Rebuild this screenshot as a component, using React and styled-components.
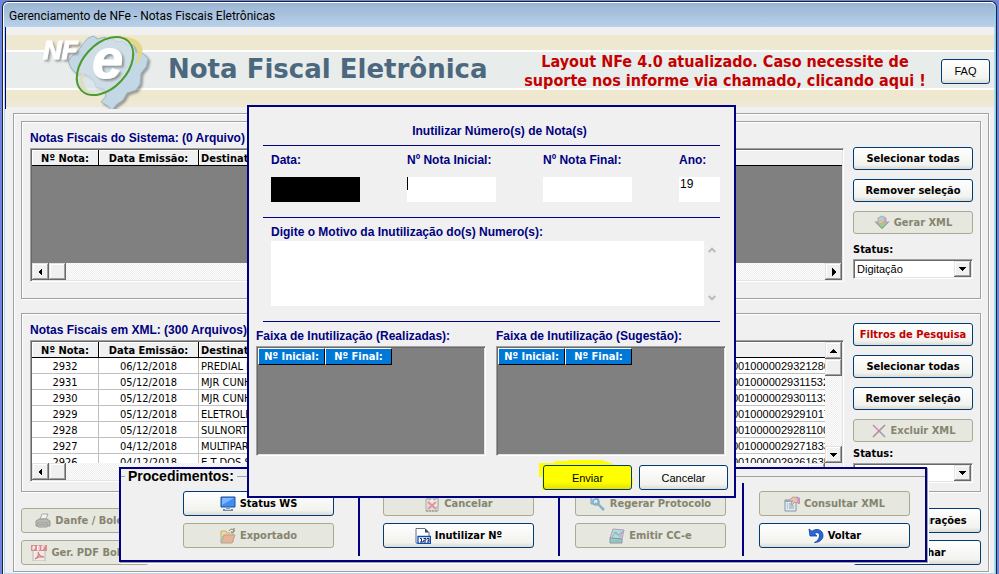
import React from "react";
import styled, { createGlobalStyle, css } from "styled-components";

const SANS = '"DejaVu Sans Condensed", "Noto Sans", sans-serif';
const SYSTEM = '"Liberation Sans", Arial, sans-serif';
const NAVY = "#000080";

const GlobalStyle = createGlobalStyle`
  *, *::before, *::after { box-sizing: border-box; }
  body { margin: 0; background: #6f86de; font-family: ${SANS}; font-size: 11px; color: #000; }
  button, input, textarea, select { font: inherit; color: inherit; margin: 0; border-radius: 0; }
`;

const etched = css`
  border: 1px solid #a0a0a0;
  box-shadow: 1px 1px 0 #fff, inset 1px 1px 0 #fff;
`;

const sunken = css`
  border: 1px solid;
  border-color: #a0a0a0 #fff #fff #a0a0a0;
  box-shadow: inset 1px 1px 0 #696969, inset -1px -1px 0 #e3e3e3;
  padding: 1px;
`;

const raised = css`
  background: #f0f0f0;
  box-shadow: inset -1px -1px 0 #696969, inset 1px 1px 0 #e3e3e3, inset -2px -2px 0 #a0a0a0, inset 2px 2px 0 #fff;
`;

const Desktop = styled.div`
  min-height: 100vh;
  padding: 1px 2px 0;
`;

const Window = styled.main`
  position: relative;
  min-height: calc(100vh - 1px);
  border: 1px solid #1c2430;
  border-bottom: 0;
  border-radius: 6px 6px 0 0;
  padding: 0 2px 2px;
  background: linear-gradient(#f0f0f0, #f0f0f0) content-box, #b9d8f0;
  box-shadow: inset 1px 1px 0 #fff, inset -1px 0 0 #7fd4ee;
`;

const TitleBar = styled.header`
  height: 25px;
  margin: 0 -1px;
  padding: 1px 5px 0;
  border-top: 1px solid #fff;
  border-radius: 5px 5px 0 0;
  background: linear-gradient(#9ab5d3, #b9d1ea);
  font: 12px/24px Roboto, "Open Sans", sans-serif;
`;

const Banner = styled.div`
  display: flex;
  align-items: center;
  height: 82px;
  padding: 6px 4px 0 35px;
  background: linear-gradient(
    #f0f0f0 8px, #efe8cf 8px, #efe8d2 23px, #fff 23px, #fff 25px,
    #e8ecea 25px, #e8ecea 61px, #fff 61px, #fff 63px, #efe8cd 63px, #efe8d5 80px, #f0f0f0 80px
  );
  border-left: 1px solid ${NAVY};
`;

const BannerTitle = styled.h1`
  flex: 1;
  margin: 0 0 4px 15px;
  color: #4c687f;
  font: bold 26px/32px "DejaVu Sans", Verdana, sans-serif;
  white-space: nowrap;
`;

const Notice = styled.a`
  width: 410px;
  margin-right: 11px;
  color: #c40000;
  font-size: 16px;
  font-weight: bold;
  line-height: 19px;
  text-align: center;
  text-decoration: none;
  white-space: nowrap;
`;

const Button = styled.button`
  display: flex;
  align-items: center;
  justify-content: center;
  gap: 4px;
  width: ${(p) => p.$width || "100%"};
  height: ${(p) => p.$height || 25}px;
  padding: 0;
  border: 1px solid #003c74;
  border-radius: 3px;
  background: linear-gradient(#fff, #f2f2ee 80%, #dcdad2);
  color: ${(p) => p.$color || "#000"};
  font-family: ${(p) => (p.$plain ? SYSTEM : SANS)};
  font-weight: ${(p) => (p.$plain ? "normal" : "bold")};
  white-space: nowrap;
  &:disabled {
    border-color: #a9ab90;
    background: #e6e7de;
    color: #85856f;
  }
`;

const Workspace = styled.div`
  ${etched}
  margin: 4px 5px 1px 8px;
  padding: 7px 7px 6px;
`;

const Group = styled.section`
  ${etched}
  display: flex;
  gap: 9px;
  margin-bottom: ${(p) => p.$after}px;
  padding: 8px 7px ${(p) => p.$bottom}px 8px;
`;

const GroupMain = styled.div`
  flex: 1;
  min-width: 0;
`;

const Heading = styled.h2`
  margin: 0 0 2px;
  color: ${NAVY};
  font: bold 12px/16px ${SYSTEM};
  white-space: nowrap;
`;

const Side = styled.div`
  display: flex;
  flex-direction: column;
  gap: 9px;
  width: 120px;
  padding-top: ${(p) => p.$top}px;
`;

const StatusField = styled.label`
  margin-top: ${(p) => p.$shift}px;
  font-weight: bold;
  line-height: 14px;
`;

const SelectBox = styled.span`
  ${sunken}
  display: flex;
  position: relative;
  height: 20px;
  margin-top: 2px;
  background: #fff;
  select {
    flex: 1;
    appearance: none;
    border: 0;
    padding: 0 20px 0 2px;
    background: transparent;
    font: 11px ${SYSTEM};
  }
`;

const SelectArrow = styled.span`
  ${raised}
  position: absolute;
  right: 1px;
  top: 1px;
  display: grid;
  place-items: center;
  width: 17px;
  height: 16px;
  pointer-events: none;
`;

const GridFrame = styled.div`
  ${sunken}
  display: flex;
  flex-direction: column;
  height: ${(p) => p.$height}px;
  background: #808080;
`;

const GridBody = styled.div`
  display: flex;
  flex: 1;
  min-height: 0;
`;

const GridView = styled.div`
  flex: 1;
  min-width: 0;
  overflow: hidden;
`;

const Table = styled.table`
  width: 100%;
  table-layout: fixed;
  border-collapse: separate;
  border-spacing: 0;
  th, td {
    height: 16px;
    padding: 2px 2px 0;
    overflow: hidden;
    line-height: 13px;
    white-space: nowrap;
    text-align: center;
  }
  th {
    background: #f0f0f0;
    border-bottom: 1px solid #000;
    border-right: 1px solid #000;
    box-shadow: inset 1px 1px 0 #fff;
  }
  td {
    background: #fff;
    border-bottom: 1px solid #c0c0c0;
    border-right: 1px solid #c0c0c0;
  }
  th:nth-child(n + 3), td:nth-child(n + 3) { text-align: left; }
  th:nth-last-child(-n + 2) { border-right: 0; }
  td:last-child { border-right: 0; font-family: ${SYSTEM}; }
`;

const Track = styled.div`
  display: flex;
  flex-direction: ${(p) => (p.$vertical ? "column" : "row")};
  flex: none;
  background: repeating-conic-gradient(#fff 0 25%, #ececec 0 50%) 0 0 / 2px 2px;
`;

const ScrollButton = styled.button`
  ${raised}
  display: grid;
  place-items: center;
  width: 17px;
  height: 17px;
  padding: 0;
  border: 0;
`;

const Thumb = styled.span`
  ${raised}
  width: 17px;
  height: 17px;
`;

const Spacer = styled.span`
  flex: 1;
`;

const Corner = styled.span`
  width: 17px;
  background: #f0f0f0;
`;

const Footer = styled.div`
  display: grid;
  grid-template-columns: 128px 128px;
  justify-content: space-between;
  gap: 7px;
`;

const Procedures = styled.section`
  position: absolute;
  top: 465px;
  left: 116px;
  right: 69px;
  height: 95px;
  border: 2px solid ${NAVY};
  background: #f0f0f0;
  box-shadow: 1px 1px 0 #a0a0a0, 2px 2px 0 #fff;
`;

const ProceduresFrame = styled.fieldset`
  margin: 0;
  padding: 0;
  border: 0;
  border-top: 1px solid #a0a0a0;
  legend {
    margin-left: 4px;
    padding: 0 3px;
    font: bold 14px/14px ${SYSTEM};
  }
`;

const ProcedureRow = styled.div`
  display: flex;
  margin-left: 62px;
`;

const ProcedureColumn = styled.div`
  display: flex;
  flex-direction: column;
  gap: 7px;
  width: 151px;
  padding-top: 8px;
`;

const Divider = styled.span`
  width: 2px;
  height: 73px;
  margin: 0 ${(p) => p.$after}px 0 ${(p) => p.$before}px;
  background: ${NAVY};
`;

const Dialog = styled.section`
  position: absolute;
  top: 103px;
  left: 244px;
  width: 489px;
  border: 2px solid ${NAVY};
  background: #f0f0f0;
  color: ${NAVY};
  font: bold 12px/14px ${SYSTEM};
`;

const DialogTitle = styled.h2`
  margin: 17px 0 0 16px;
  font: bold 12px/14px ${SYSTEM};
  text-align: center;
`;

const Rule = styled.hr`
  margin: ${(p) => p.$top}px 14px 0;
  border: 0;
  border-top: 1px solid ${NAVY};
`;

const FieldRow = styled.div`
  display: grid;
  grid-template-columns: 89px 89px 89px 41px;
  column-gap: 47px;
  margin: 7px 14px 0 22px;
`;

const Field = styled.label`
  position: relative;
  display: flex;
  flex-direction: column;
  gap: 10px;
  white-space: nowrap;
  input {
    width: 100%;
    height: 25px;
    border: 0;
    padding: 0 0 11px 1px;
    background: ${(p) => (p.$masked ? "#000" : "#fff")};
    color: #000;
    font: 12px/14px ${SYSTEM};
    outline: 0;
  }
`;

const Caret = styled.span`
  position: absolute;
  left: 0;
  bottom: 12px;
  width: 1px;
  height: 13px;
  background: #000;
`;

const Reason = styled.div`
  margin: 7px 14px 0 22px;
`;

const ReasonBox = styled.div`
  display: flex;
  margin-top: 2px;
  textarea {
    flex: 1;
    height: 65px;
    border: 0;
    background: #fff;
    resize: none;
    outline: 0;
  }
`;

const ReasonScroll = styled.div`
  display: flex;
  flex-direction: column;
  justify-content: space-between;
  align-items: center;
  width: 16px;
  padding: 6px 0 5px;
`;

const Ranges = styled.div`
  display: grid;
  grid-template-columns: 230px 230px;
  gap: 10px;
  margin: 7px 7px 0;
`;

const RangeFrame = styled.div`
  ${sunken}
  height: 110px;
  margin-top: 3px;
  background: #808080;
  color: #fff;
  font-family: ${SANS};
  font-size: 11px;
  table { border-spacing: 0; table-layout: fixed; width: 134px; }
  th {
    height: 17px;
    padding: 0;
    background: #0078d7;
    border: 1px solid;
    border-color: #fff #000 #000 #fff;
    line-height: 14px;
    white-space: nowrap;
  }
`;

const Actions = styled.div`
  display: flex;
  justify-content: flex-end;
  gap: 7px;
  padding: 9px 6px 6px;
  font-size: 11px;
`;

const Highlight = styled.span`
  position: relative;
  & > svg { position: absolute; left: -4px; top: -5px; }
  & > button {
    position: relative;
    background: linear-gradient(#ffff00 70%, #e4e000);
  }
`;

const arrowPaths = {
  left: "M5 0v8L1 4z",
  right: "M2 0v8l4-4z",
  up: "M0 6h7L3.500 2z",
  down: "M0 2h7L3.500 6z",
};

function Arrow({ to }) {
  return (
    <svg width="7" height="8" viewBox="0 0 7 8" shapeRendering="crispEdges" aria-hidden="true">
      <path d={arrowPaths[to]} />
    </svg>
  );
}

function Chevron({ down }) {
  return (
    <svg width="8" height="6" viewBox="0 0 8 6" fill="none" stroke="#bcbcbc" strokeWidth="2" aria-hidden="true">
      <path d={down ? "M.7 1l3.300 3.300L7.300 1" : "M.7 5L4 1.700 7.300 5"} />
    </svg>
  );
}

const icons = {
  layers: (
    <>
      <path d="M1 6.500h14L8 14z" fill="#aeb0aa" />
      <path d="M4 3l4-2 4 2v4H4z" fill="#93dcd0" stroke="#c39bc0" />
      <path d="M4 8h9l-5 5z" fill="#96d087" />
      <path d="M5 5h4v3H5z" fill="#f3b49d" />
      <path d="M10 3h2v4h-2z" fill="#df91da" />
      <path d="M1 6.500l7 7 7-7" fill="none" stroke="#8c8c86" />
    </>
  ),
  remove: (
    <>
      <path d="M2 2l12 12" stroke="#d08ac0" strokeWidth="1.600" />
      <path d="M14 2L2 14" stroke="#b58aa6" strokeWidth="1.600" />
      <path d="M9 8l5 5" stroke="#74cfcf" strokeWidth="1" />
    </>
  ),
  printer: (
    <>
      <path d="M5 6l2-5h6l-2 5z" fill="#f2f2ee" stroke="#a8a8a4" />
      <path d="M1 8l3-2h8l3 2v5H1z" fill="#b8b8b5" stroke="#999995" />
      <path d="M3 10h9v4H3z" fill="#d2d2cf" stroke="#999995" />
      <path d="M4 12h7" stroke="#858582" />
      <path d="M12 9h2" stroke="#df9b9b" />
    </>
  ),
  pdf: (
    <>
      <path d="M2 5h12v11H2z" fill="#eeeae5" stroke="#bdb9b4" />
      <path d="M0 0h16v6H0z" fill="#d78e8e" />
      <path d="M2 5V1.500h1.500v1.800H2M6.500 1v4h1.500V1zM11 5V1h3M11 3h2" fill="none" stroke="#fff" />
      <path d="M4 14c3-2 4-5 3-7 1 4 3 5 6 5-3-1-6 0-9 2z" fill="none" stroke="#d78282" strokeWidth="1.300" />
    </>
  ),
  monitor: (
    <>
      <path d="M1 1h14v10H1z" fill="#3f8df5" stroke="#1c4f9e" />
      <path d="M2 2h12L2 9z" fill="#7cb8ff" />
      <path d="M6 11h4v2H6z" fill="#8c9db5" />
      <path d="M3 14h10" stroke="#7389a8" strokeWidth="2" />
      <path d="M5 13.500h6" stroke="#c8d8ea" />
    </>
  ),
  folder: (
    <>
      <path d="M1 3h5l1 2h6v9H1z" fill="#f2d79d" stroke="#c6ae7a" />
      <path d="M4 7h11l-3 8H1z" fill="#e7b39c" stroke="#b7a38d" />
      <path d="M3 8l-2 6" stroke="#76d6cd" />
      <path d="M9 3c2-3 4-2 5 0M14 0v4h-3" fill="none" stroke="#797b70" />
    </>
  ),
  cancelPage: (
    <>
      <path d="M2 3h12v12H2z" fill="#deddd7" stroke="#adada5" />
      <path d="M3 2l3 2 2-3 2 3 4-2v8l-2 2" fill="#eaeae5" stroke="#aaa" />
      <path d="M4 6l8 7M12 6l-8 7" stroke="#df9898" strokeWidth="2" />
      <path d="M2 15h12" stroke="#92928c" strokeDasharray="2 1" />
    </>
  ),
  numberedPage: (
    <>
      <path d="M1 .5h9l4 4V15H1z" fill="#fff" stroke="#5f6f86" />
      <path d="M10 .5v4h4z" fill="#30435e" />
      <path d="M3 8.500h12.500v7H3z" fill="#fff" stroke="#0a4ac1" strokeWidth="1.300" />
      <path d="M5 10.500h1.500V14M5 14h3M8.500 10.500H11v1.700H8.700V14H11M12 10.500h2V14h-2M12.500 12.200H14" fill="none" stroke="#122a55" />
    </>
  ),
  key: (
    <>
      <path d="M1 1h7v7H1z" fill="#9fcfe9" stroke="#8fa3b3" />
      <path d="M3 2l4 4M3 5l2 2" stroke="#eef6fb" strokeWidth="1.500" />
      <circle cx="6" cy="6" r="3" fill="none" stroke="#89aebd" strokeWidth="1.600" />
      <path d="M8 8l6 6" stroke="#7bb9dc" strokeWidth="2.500" />
      <path d="M10 12l2-1M12 14l2-1" stroke="#98a5a5" />
    </>
  ),
  letter: (
    <>
      <path d="M4 1l11 1-2 9-12-1z" fill="#aadedf" stroke="#b39cbf" />
      <path d="M1 10l12 1v4H1z" fill="#8fd2d2" stroke="#91909c" />
      <path d="M3 9l4-5 4 5 3-6" fill="none" stroke="#d28fc7" />
      <path d="M5 4l4 3 4-3M3 13h8" fill="none" stroke="#8bbb98" />
    </>
  ),
  properties: (
    <>
      <path d="M1 4h11v11H1z" fill="#e4ebef" stroke="#8496a0" />
      <path d="M1 4h11v2H1z" fill="#8aa9bf" />
      <path d="M3 8h1M3 10h1M3 12h1M5 8h3M5 10h5M5 12h5" stroke="#78a9bd" />
      <path d="M4 5l5-4 5 1v5l-3-1-3 3-1-2 2-2z" fill="#eac3a9" stroke="#b69da1" />
      <path d="M12 0l4 2v6h-2V4z" fill="#c795c5" />
    </>
  ),
  back: (
    <path d="M1 1l1 7h7L6.500 5.800C9 3.500 12 5 11.500 8c-.3 3-2 5-5 6.500C12 14.500 15 11 15 7.500 15 2 8.500-.5 4 3.300z" fill="#2767d8" stroke="#123f9f" strokeWidth=".8" />
  ),
};

function Icon({ name }) {
  return (
    <svg width="16" height="16" viewBox="0 0 16 16" aria-hidden="true">
      {icons[name]}
    </svg>
  );
}

function Logo() {
  return (
    <svg width="112" height="76" viewBox="0 0 112 76" role="img" aria-label="NFe">
      <defs>
        <filter id="soft" x="-20%" y="-20%" width="150%" height="150%">
          <feDropShadow dx="2" dy="2" stdDeviation="1" floodColor="#555" floodOpacity=".55" />
        </filter>
      </defs>
      <g filter="url(#soft)">
        <path
          d="M47 5l6-2 3 3 8-2 3 4 4-3 4 4 7-1 3 4 8 0 2 7 8 2 4 5-2 8-5 6-1 11-4 6-9 3-4 7-7 5-4 5-4-4-7-4 5-6-2-7-8-2-3-8-8-5-9-1-5-5-3-7 6-7 4-3 4-6z"
          fill="#c3d8e4" stroke="#9ab6c6"
        />
      </g>
      <path d="M82 4c13 0 22 7 19 17-2 6-3 8-6 11 2-8 3-14-1-19-3-4-8-6-14-7z" fill="#e6d786" />
      <path d="M43 38c-2 12 1 20 10 22l-6 2c-8-2-10-11-8-19z" fill="#e6d786" />
      <ellipse cx="64" cy="33" rx="34" ry="22" transform="rotate(-47 64 33)" fill="#d6e2e6" fillOpacity=".65" stroke="#4b9b31" strokeWidth="2" />
      <g filter="url(#soft)" fill="#fff" fontFamily="Liberation Sans, sans-serif" fontWeight="bold" fontStyle="italic">
        <text x="2" y="26" fontSize="26" stroke="#fff">NF</text>
        <text x="51" y="45" fontSize="56" stroke="#fff">e</text>
      </g>
    </svg>
  );
}

const invoices = [
  ["2932", "06/12/2018", "PREDIAL NORTE", "0010000029321286"],
  ["2931", "05/12/2018", "MJR CUNHA", "0010000029311532"],
  ["2930", "05/12/2018", "MJR CUNHA", "0010000029301133"],
  ["2929", "05/12/2018", "ELETROLESTE", "0010000029291017"],
  ["2928", "05/12/2018", "SULNORTE", "0010000029281100"],
  ["2927", "04/12/2018", "MULTIPARTES", "0010000029271833"],
  ["2926", "04/12/2018", "E.T DOS SANTOS", "0010000029261635"],
];

function InvoiceGrid({ rows, height, label }) {
  const scrolls = rows.length > 0;
  return (
    <GridFrame $height={height}>
      <GridBody>
        <GridView>
          <Table aria-label={label}>
            <colgroup>
              <col width="67" />
              <col width="100" />
              <col />
              <col width={scrolls ? 95 : 112} />
            </colgroup>
            <thead>
              <tr>
                <th>Nº Nota:</th>
                <th>Data Emissão:</th>
                <th>Destinatário:</th>
                <th aria-label="Chave" />
              </tr>
            </thead>
            <tbody>
              {rows.map((row) => (
                <tr key={row[0]}>
                  {row.map((cell) => <td key={cell}>{cell}</td>)}
                </tr>
              ))}
            </tbody>
          </Table>
        </GridView>
        {scrolls && (
          <Track $vertical>
            <ScrollButton aria-label="Subir"><Arrow to="up" /></ScrollButton>
            <Thumb />
            <Spacer />
            <ScrollButton aria-label="Descer"><Arrow to="down" /></ScrollButton>
          </Track>
        )}
      </GridBody>
      <Track>
        <ScrollButton aria-label="Esquerda"><Arrow to="left" /></ScrollButton>
        <Thumb />
        <Spacer />
        <ScrollButton aria-label="Direita"><Arrow to="right" /></ScrollButton>
        {scrolls && <Corner />}
      </Track>
    </GridFrame>
  );
}

function Status({ value, shift }) {
  return (
    <StatusField $shift={shift}>
      Status:
      <SelectBox>
        <select defaultValue={value}>
          <option value={value}>{value}</option>
        </select>
        <SelectArrow><Arrow to="down" /></SelectArrow>
      </SelectBox>
    </StatusField>
  );
}

function Range({ title }) {
  return (
    <div>
      {title}
      <RangeFrame>
        <table aria-label={title}>
          <thead>
            <tr>
              <th>Nº Inicial:</th>
              <th>Nº Final:</th>
            </tr>
          </thead>
        </table>
      </RangeFrame>
    </div>
  );
}

function InutilizarDialog() {
  return (
    <Dialog role="dialog" aria-labelledby="dialog-title">
      <DialogTitle id="dialog-title">Inutilizar Número(s) de Nota(s)</DialogTitle>
      <Rule $top={7} />
      <FieldRow>
        <Field $masked>Data:<input /></Field>
        <Field>Nº Nota Inicial:<input /><Caret /></Field>
        <Field>Nº Nota Final:<input /></Field>
        <Field>Ano:<input defaultValue="19" /></Field>
      </FieldRow>
      <Rule $top={15} />
      <Reason>
        <label htmlFor="reason">Digite o Motivo da Inutilização do(s) Numero(s):</label>
        <ReasonBox>
          <textarea id="reason" />
          <ReasonScroll><Chevron /><Chevron down /></ReasonScroll>
        </ReasonBox>
      </Reason>
      <Rule $top={15} />
      <Ranges>
        <Range title="Faixa de Inutilização (Realizadas):" />
        <Range title="Faixa de Inutilização (Sugestão):" />
      </Ranges>
      <Actions>
        <Highlight>
          <svg width="95" height="32" viewBox="0 0 95 32" aria-hidden="true">
            <path d="M0 3h16V1h13V0h34l6 2 8 3h15v12l2 2v5l-2 2-16 2H30v2H3v-13H0z" fill="#ffff00" />
          </svg>
          <Button $plain $width="89px">Enviar</Button>
        </Highlight>
        <Button $plain $width="89px">Cancelar</Button>
      </Actions>
    </Dialog>
  );
}

function ProceduresPanel() {
  return (
    <Procedures>
      <ProceduresFrame>
        <legend>Procedimentos:</legend>
        <ProcedureRow>
          <ProcedureColumn>
            <Button><Icon name="monitor" />Status WS</Button>
            <Button disabled><Icon name="folder" />Exportado</Button>
          </ProcedureColumn>
          <Divider $before={24} $after={23} />
          <ProcedureColumn>
            <Button disabled><Icon name="cancelPage" />Cancelar</Button>
            <Button><Icon name="numberedPage" />Inutilizar Nº</Button>
          </ProcedureColumn>
          <Divider $before={24} $after={15} />
          <ProcedureColumn>
            <Button disabled><Icon name="key" />Regerar Protocolo</Button>
            <Button disabled><Icon name="letter" />Emitir CC-e</Button>
          </ProcedureColumn>
          <Divider $before={16} $after={15} />
          <ProcedureColumn>
            <Button disabled><Icon name="properties" />Consultar XML</Button>
            <Button><Icon name="back" />Voltar</Button>
          </ProcedureColumn>
        </ProcedureRow>
      </ProceduresFrame>
    </Procedures>
  );
}

export default function App() {
  return (
    <Desktop>
      <GlobalStyle />
      <Window>
        <TitleBar>Gerenciamento de NFe - Notas Fiscais Eletrônicas</TitleBar>
        <Banner>
          <Logo />
          <BannerTitle>Nota Fiscal Eletrônica</BannerTitle>
          <Notice href="#chamado">
            Layout NFe 4.0 atualizado. Caso necessite de<br />
            suporte nos informe via chamado, clicando aqui !
          </Notice>
          <Button $plain $width="49px">FAQ</Button>
        </Banner>
        <Workspace>
          <Group $bottom={16} $after={14}>
            <GroupMain>
              <Heading>Notas Fiscais do Sistema: (0 Arquivo)</Heading>
              <InvoiceGrid rows={[]} height={134} label="Notas fiscais do sistema" />
            </GroupMain>
            <Side $top={17}>
              <Button $height={23}>Selecionar todas</Button>
              <Button $height={23}>Remover seleção</Button>
              <Button $height={23} disabled><Icon name="layers" />Gerar XML</Button>
              <Status value="Digitação" shift={0} />
            </Side>
          </Group>
          <Group $bottom={8} $after={16}>
            <GroupMain>
              <Heading>Notas Fiscais em XML: (300 Arquivos)</Heading>
              <InvoiceGrid rows={invoices} height={142} label="Notas fiscais em XML" />
            </GroupMain>
            <Side $top={1}>
              <Button $height={23} $color="#c40000">Filtros de Pesquisa</Button>
              <Button $height={23}>Selecionar todas</Button>
              <Button $height={23}>Remover seleção</Button>
              <Button $height={23} disabled><Icon name="remove" />Excluir XML</Button>
              <Status value="" shift={-4} />
            </Side>
          </Group>
          <Footer>
            <Button disabled><Icon name="printer" />Danfe / Boleto</Button>
            <Button><Icon name="properties" />Configurações</Button>
            <Button disabled><Icon name="pdf" />Ger. PDF Boleto</Button>
            <Button><Icon name="back" />Fechar</Button>
          </Footer>
        </Workspace>
        <ProceduresPanel />
        <InutilizarDialog />
      </Window>
    </Desktop>
  );
}
